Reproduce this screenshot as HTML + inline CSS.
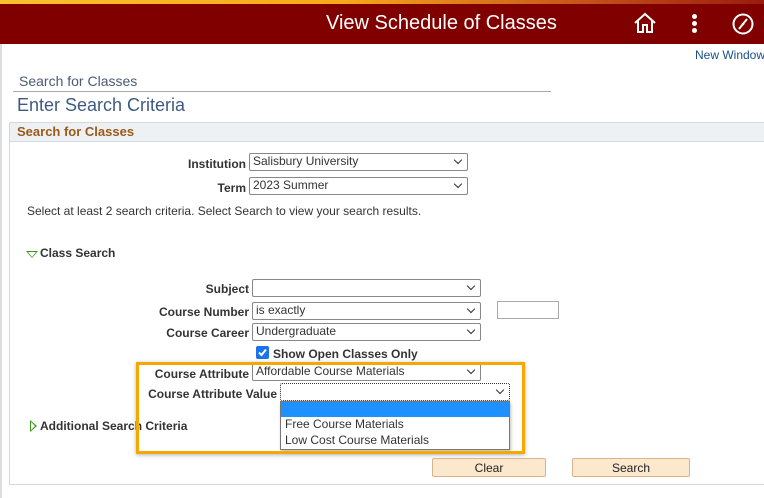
<!DOCTYPE html>
<html><head><style>
body{margin:0;width:764px;height:498px;position:relative;overflow:hidden;background:#fff;font-family:"Liberation Sans",Arial,sans-serif;}
.a{position:absolute;white-space:nowrap;}
.lbl{position:absolute;font-size:12px;font-weight:bold;color:#333;text-align:right;white-space:nowrap;}
.sel{position:absolute;border:1px solid #888;border-radius:2px;background:#fff;font-size:12px;color:#333;line-height:15px;padding-left:3px;box-sizing:border-box;height:18px;white-space:nowrap;}
.sel:after{content:"";position:absolute;right:6px;top:3px;width:5px;height:5px;border-right:1.5px solid #333;border-bottom:1.5px solid #333;transform:rotate(45deg);}
.btn{position:absolute;height:19px;background:#fbe8cd;border:1px solid #d9b48a;border-radius:2px;font-size:12px;text-align:center;line-height:18px;color:#222;box-sizing:border-box;}
</style></head><body>
<div class="a" style="left:0;top:0;width:764px;height:4px;background:linear-gradient(90deg,#fbc02d 0%,#f7a81b 45%,#c8571b 75%,#9b1b0e 100%)"></div>
<div class="a" style="left:0;top:4px;width:764px;height:40px;background:#800000"></div>
<div class="a" style="left:326px;top:12px;color:#fff;font-size:20px;">View Schedule of Classes</div>
<svg class="a" style="left:633px;top:12px" width="24" height="22" viewBox="0 0 24 22"><path d="M2 11 L12 2 L22 11 M5 9 V20 H10 V13 H14 V20 H19 V9" fill="none" stroke="#fff" stroke-width="2"/></svg>
<div class="a" style="left:692px;top:14px;width:5px;height:5px;border-radius:50%;background:#fff"></div>
<div class="a" style="left:692px;top:21px;width:5px;height:5px;border-radius:50%;background:#fff"></div>
<div class="a" style="left:692px;top:28px;width:5px;height:5px;border-radius:50%;background:#fff"></div>
<svg class="a" style="left:731px;top:12px" width="24" height="24" viewBox="0 0 24 24"><circle cx="12" cy="12" r="9.5" fill="none" stroke="#fff" stroke-width="2"/><path d="M16 7 L8 17" stroke="#fff" stroke-width="2"/><circle cx="12" cy="12" r="1.3" fill="#fff"/></svg>
<div class="a" style="left:0;top:44px;width:2px;height:454px;background:#ddd"></div>
<div class="a" style="left:695px;top:48px;font-size:12px;color:#1a4f8b">New Window</div>
<div class="a" style="left:19px;top:73px;font-size:14px;color:#4a5a75">Search for Classes</div>
<div class="a" style="left:13px;top:91px;width:538px;height:1px;background:#aaa"></div>
<div class="a" style="left:17px;top:95px;font-size:18px;color:#3e5a80">Enter Search Criteria</div>
<div class="a" style="left:9px;top:122px;width:755px;height:363px;border:1px solid #d3d8dc;border-right:none;box-sizing:border-box"></div>
<div class="a" style="left:10px;top:123px;width:754px;height:18px;background:#eef1f3;border-bottom:1px solid #d3d8dc"></div>
<div class="a" style="left:17px;top:124px;font-size:13px;font-weight:bold;color:#9b5a1a">Search for Classes</div>
<div class="lbl" style="right:518px;top:157px">Institution</div>
<div class="sel" style="left:249px;top:153px;width:219px">Salisbury University</div>
<div class="lbl" style="right:518px;top:181px">Term</div>
<div class="sel" style="left:249px;top:177px;width:219px">2023 Summer</div>
<div class="a" style="left:27px;top:204px;font-size:12px;color:#333">Select at least 2 search criteria. Select Search to view your search results.</div>
<div class="a" style="left:26px;top:251px;width:0;height:0;border-left:6px solid transparent;border-right:6px solid transparent;border-top:7px solid #3a9a1a"></div>
<div class="a" style="left:28px;top:252px;width:0;height:0;border-left:4px solid transparent;border-right:4px solid transparent;border-top:5px solid #fff"></div>
<div class="a" style="left:40px;top:246px;font-size:12px;font-weight:bold;color:#333">Class Search</div>
<div class="lbl" style="right:515px;top:282px">Subject</div>
<div class="sel" style="left:252px;top:279px;width:229px"></div>
<div class="lbl" style="right:515px;top:305px">Course Number</div>
<div class="sel" style="left:252px;top:302px;width:229px">is exactly</div>
<div class="a" style="left:497px;top:301px;width:62px;height:18px;border:1px solid #aaa;box-sizing:border-box"></div>
<div class="lbl" style="right:515px;top:326px">Course Career</div>
<div class="sel" style="left:252px;top:323px;width:229px">Undergraduate</div>
<div class="a" style="left:256px;top:346px;width:13px;height:13px;background:#1a73e8;border-radius:2px"></div>
<svg class="a" style="left:256px;top:346px" width="13" height="13"><path d="M3 6.5 L5.5 9 L10 3.5" stroke="#fff" stroke-width="2" fill="none"/></svg>
<div class="a" style="left:273px;top:347px;font-size:12px;font-weight:bold;color:#333">Show Open Classes Only</div>
<div class="lbl" style="right:515px;top:367px">Course Attribute</div>
<div class="sel" style="left:252px;top:363px;width:229px">Affordable Course Materials</div>
<div class="lbl" style="right:487px;top:387px">Course Attribute Value</div>
<div class="sel" style="left:280px;top:383px;width:230px;border:1px dotted #333"></div>
<div class="a" style="left:280px;top:401px;width:230px;height:49px;border:1px solid #777;background:#fff;box-sizing:border-box;box-shadow:1px 2px 3px rgba(0,0,0,.25)"></div>
<div class="a" style="left:281px;top:402px;width:228px;height:15px;background:#1e90ff"></div>
<div class="a" style="left:285px;top:417px;font-size:12px;color:#333">Free Course Materials</div>
<div class="a" style="left:285px;top:433px;font-size:12px;color:#333">Low Cost Course Materials</div>
<div class="a" style="left:30px;top:420px;width:0;height:0;border-top:6px solid transparent;border-bottom:6px solid transparent;border-left:7px solid #3a9a1a"></div>
<div class="a" style="left:31px;top:422px;width:0;height:0;border-top:4px solid transparent;border-bottom:4px solid transparent;border-left:4px solid #fff"></div>
<div class="a" style="left:40px;top:419px;font-size:12px;font-weight:bold;color:#333">Additional Search Criteria</div>
<div class="a" style="left:136px;top:362px;width:389px;height:92px;border:3px solid #f5a800;box-sizing:border-box;box-shadow:0 1px 4px rgba(0,0,0,.3)"></div>
<div class="btn" style="left:432px;top:458px;width:114px">Clear</div>
<div class="btn" style="left:572px;top:458px;width:118px">Search</div>
</body></html>
